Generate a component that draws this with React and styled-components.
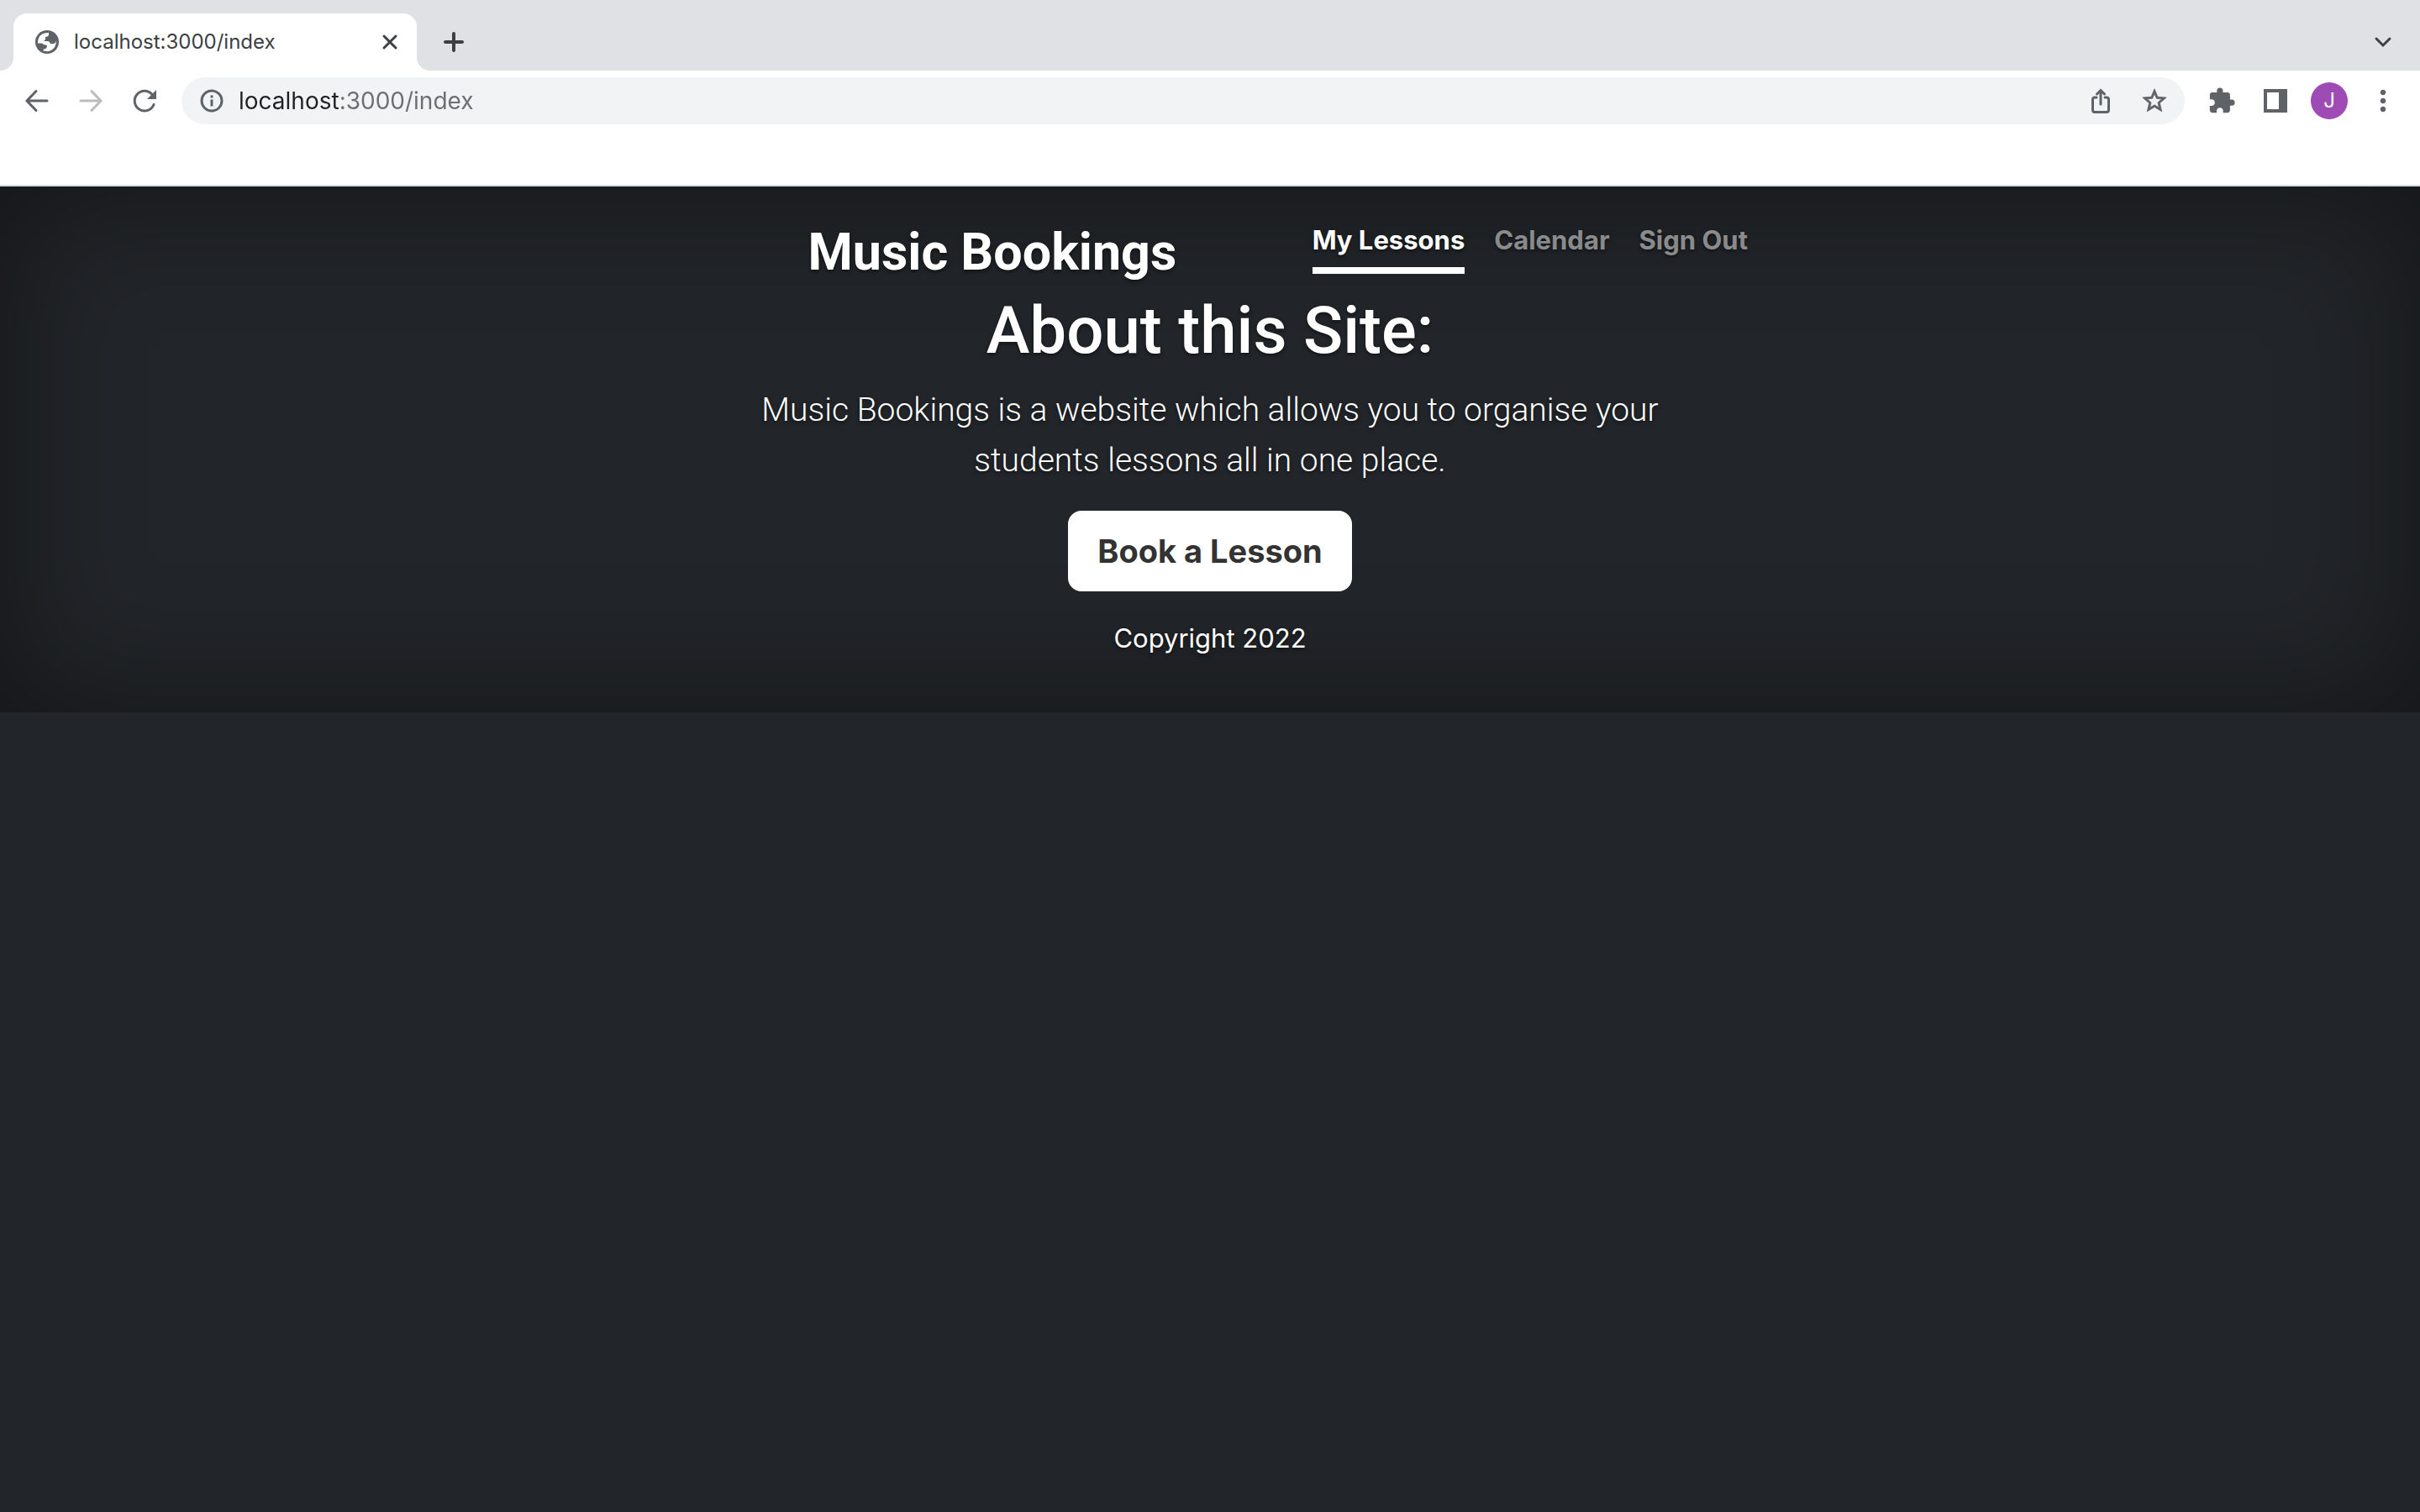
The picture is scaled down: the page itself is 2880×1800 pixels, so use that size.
import React from "react";
import styled, { createGlobalStyle } from "styled-components";
import { MdExtension, MdStarOutline, MdMoreVert } from "react-icons/md";

const text = 'Inter, "Liberation Sans", sans-serif';
const display = 'Roboto, "Liberation Sans", sans-serif';

const GlobalStyle = createGlobalStyle`
  *, *::before, *::after { box-sizing: border-box; }
  body { margin: 0; background: #222529; font-family: ${text}; }
  h1, h2, p { margin: 0; }
  button, input { font-family: inherit; }
`;

const Page = styled.div`
  min-height: 100vh;
  background: #222529;
`;

const TabStrip = styled.div`
  display: flex;
  align-items: flex-end;
  height: 84px;
  padding: 0 16px;
  background: #dfe1e5;
`;

const Tab = styled.div`
  position: relative;
  display: flex;
  align-items: center;
  width: 480px;
  height: 68px;
  padding: 0 20px 0 24px;
  gap: 16px;
  border-radius: 16px 16px 0 0;
  background: #fff;

  &::before,
  &::after {
    content: "";
    position: absolute;
    bottom: 0;
    width: 16px;
    height: 16px;
  }
  &::before {
    left: -16px;
    background: radial-gradient(circle at 0 0, transparent 16px, #fff 16px);
  }
  &::after {
    right: -16px;
    background: radial-gradient(circle at 100% 0, transparent 16px, #fff 16px);
  }
`;

const TabTitle = styled.span`
  flex: 1;
  font-size: 24px;
  line-height: 32px;
  color: #3c4043;
`;

const IconButton = styled.button`
  display: flex;
  align-items: center;
  justify-content: center;
  flex: none;
  width: ${({ $size }) => $size}px;
  height: ${({ $size }) => $size}px;
  padding: 0;
  border: 0;
  border-radius: 50%;
  background: none;
  color: ${({ $color }) => $color || "#5f6368"};
`;

const NewTab = styled(IconButton)`
  margin: 0 auto 6px 16px;
`;

const TabSearch = styled(IconButton)`
  margin-bottom: 6px;
`;

const Toolbar = styled.form`
  display: flex;
  align-items: center;
  height: 72px;
  padding: 0 16px;
  gap: 8px;
  background: #fff;
`;

const Omnibox = styled.div`
  display: flex;
  align-items: center;
  flex: 1;
  height: 56px;
  margin: 0 8px;
  padding: 0 8px;
  gap: 4px;
  border-radius: 28px;
  background: #f1f3f4;
`;

const PageActions = styled.div`
  display: flex;
  gap: 8px;
`;

/* The host is dark, the port and path are grey. */
const Address = styled.input`
  flex: 1;
  min-width: 0;
  height: 48px;
  padding: 0;
  border: 0;
  outline: 0;
  font-size: 28px;
  line-height: 40px;
  color: #202124;
  background: linear-gradient(90deg, #202124 120px, #6b6e72 120px);
  background-clip: text;
  -webkit-background-clip: text;
  -webkit-text-fill-color: transparent;
`;

const Avatar = styled.button`
  flex: none;
  width: 44px;
  height: 44px;
  margin: 0 6px;
  padding: 0;
  border: 0;
  border-radius: 50%;
  background: #9e4bb5;
  color: #fff;
  font-size: 24px;
  line-height: 44px;
`;

const BookmarkBar = styled.div`
  height: 66px;
  border-bottom: 2px solid #d8dade;
  background: #fff;
`;

const Cover = styled.div`
  padding: 32px;
  color: #fff;
  text-shadow: 0 2px 4px rgba(0, 0, 0, 0.5);
  box-shadow: inset 0 0 160px rgba(0, 0, 0, 0.45);
`;

const Container = styled.div`
  display: flex;
  flex-direction: column;
  max-width: 1280px;
  margin: 0 auto;
  text-align: center;
`;

const Masthead = styled.header`
  display: flex;
  align-items: flex-start;
  height: 92px;
`;

const Brand = styled.h2`
  flex: 1;
  padding-top: 8px;
  font-family: ${display};
  font-size: 61px;
  line-height: 76px;
  font-weight: 700;
`;

const Nav = styled.nav`
  display: flex;
  gap: 35px;
`;

const NavLink = styled.a`
  padding: 8px 0;
  border-bottom: 8px solid ${({ $active }) => ($active ? "#fff" : "transparent")};
  color: ${({ $active }) => ($active ? "#fff" : "rgba(255, 255, 255, 0.5)")};
  font-size: 31px;
  line-height: 48px;
  font-weight: 700;
  text-decoration: none;
`;

const Main = styled.main`
  display: flex;
  flex-direction: column;
  align-items: center;
  padding: 0 32px;
`;

const Title = styled.h1`
  margin-bottom: 16px;
  font-family: ${display};
  font-size: 78px;
  line-height: 96px;
  font-weight: 500;
`;

const Lead = styled.p`
  max-width: 1120px;
  margin-bottom: 30px;
  font-family: ${display};
  font-size: 39px;
  line-height: 60px;
  font-weight: 350;
`;

const BookButton = styled.button`
  margin-bottom: 32px;
  padding: 16px 33px;
  border: 2px solid #fff;
  border-radius: 16px;
  background: #fff;
  color: #333;
  font-size: 38px;
  line-height: 60px;
  font-weight: 700;
`;

const Footer = styled.footer`
  padding-bottom: 32px;
  font-size: 31px;
  line-height: 48px;
`;

const Stroke = ({ size, width, children }) => (
  <svg
    width={size}
    height={size}
    viewBox={`0 0 ${size} ${size}`}
    fill="none"
    stroke="currentColor"
    strokeWidth={width}
    aria-hidden="true"
  >
    {children}
  </svg>
);

const GlobeIcon = () => (
  <svg width="32" height="32" viewBox="0 0 32 32" aria-hidden="true">
    <circle cx="16" cy="16" r="14" fill="#5f6368" />
    <path
      d="M5 15Q6 7 13 5.500L18 5v3q-1 2-4 2v3q-1 2-3 2h6q3 1 2.500 3H24q2-.5 3-3.500Q27 25 17 27.200L11.500 26.500l.5-2q4 0 4-4.500l-4-1-2-1.500H5z"
      fill="#fff"
    />
  </svg>
);

const links = ["My Lessons", "Calendar", "Sign Out"];

export default function App() {
  return (
    <Page>
      <GlobalStyle />
      <TabStrip>
        <Tab>
          <GlobeIcon />
          <TabTitle>localhost:3000/index</TabTitle>
          <IconButton type="button" $size={24} $color="#3c4043" aria-label="Close tab">
            <Stroke size={24} width={3}>
              <path d="M5 5l14 14M19 5L5 19" strokeLinecap="round" />
            </Stroke>
          </IconButton>
        </Tab>
        <NewTab type="button" $size={56} $color="#3c4043" aria-label="New tab">
          <Stroke size={32} width={4}>
            <path d="M16 6v20M6 16h20" strokeLinecap="round" />
          </Stroke>
        </NewTab>
        <TabSearch type="button" $size={56} $color="#3c4043" aria-label="Search tabs">
          <Stroke size={32} width={3}>
            <path d="M8 12l8 8 8-8" strokeLinecap="round" />
          </Stroke>
        </TabSearch>
      </TabStrip>

      <Toolbar onSubmit={(e) => e.preventDefault()}>
        <IconButton type="button" $size={56} aria-label="Back">
          <Stroke size={32} width={3}>
            <path d="M28 16H4M15 4.500L4 16l11 11.500" strokeLinecap="round" />
          </Stroke>
        </IconButton>
        <IconButton type="button" $size={56} $color="#babcbe" aria-label="Forward">
          <Stroke size={32} width={3}>
            <path d="M4 16h24M17 4.500L28 16 17 27.500" strokeLinecap="round" />
          </Stroke>
        </IconButton>
        <IconButton type="button" $size={56} aria-label="Reload">
          <Stroke size={32} width={3}>
            <path d="M27 20.500A11.800 11.800 0 1 1 25 8.500" strokeLinecap="round" />
            <path d="M30 3v11H19z" fill="currentColor" stroke="none" />
          </Stroke>
        </IconButton>
        <Omnibox>
          <IconButton type="button" $size={56} aria-label="Site information">
            <Stroke size={32} width={3}>
              <circle cx="16" cy="16" r="12" />
              <path d="M16 14.500V22.500M16 9.500v3" />
            </Stroke>
          </IconButton>
          <Address type="text" aria-label="Address" defaultValue="localhost:3000/index" />
          <PageActions>
            <IconButton type="button" $size={56} aria-label="Share">
              <Stroke size={32} width={3}>
                <path
                  d="M11 12H9a2.500 2.500 0 0 0-2.500 2.500v12.500a2.500 2.500 0 0 0 2.500 2.500h14a2.500 2.500 0 0 0 2.500-2.500V14.500A2.500 2.500 0 0 0 23 12h-2M16 20V4M11.500 8L16 3.500 20.500 8"
                  strokeLinecap="round"
                />
              </Stroke>
            </IconButton>
            <IconButton type="button" $size={56} aria-label="Bookmark this page">
              <MdStarOutline size={34} strokeWidth={0.5} />
            </IconButton>
          </PageActions>
        </Omnibox>
        <IconButton type="button" $size={56} aria-label="Extensions">
          <MdExtension size={34} />
        </IconButton>
        <IconButton type="button" $size={56} aria-label="Side panel">
          <svg width="32" height="32" viewBox="0 0 32 32" aria-hidden="true">
            <path d="M2 2h28v28H2zM6 6v20h14V6z" fill="currentColor" fillRule="evenodd" />
          </svg>
        </IconButton>
        <Avatar type="button">J</Avatar>
        <IconButton type="button" $size={56} aria-label="Menu">
          <MdMoreVert size={40} />
        </IconButton>
      </Toolbar>
      <BookmarkBar />

      <Cover>
        <Container>
          <Masthead>
            <Brand>Music Bookings</Brand>
            <Nav>
              {links.map((label, i) => (
                <NavLink key={label} href="#" $active={i === 0}>
                  {label}
                </NavLink>
              ))}
            </Nav>
          </Masthead>
          <Main>
            <Title>About this Site:</Title>
            <Lead>
              Music Bookings is a website which allows you to organise your students lessons all in
              one place.
            </Lead>
            <BookButton type="button">Book a Lesson</BookButton>
          </Main>
          <Footer>
            <p>Copyright 2022</p>
          </Footer>
        </Container>
      </Cover>
    </Page>
  );
}
